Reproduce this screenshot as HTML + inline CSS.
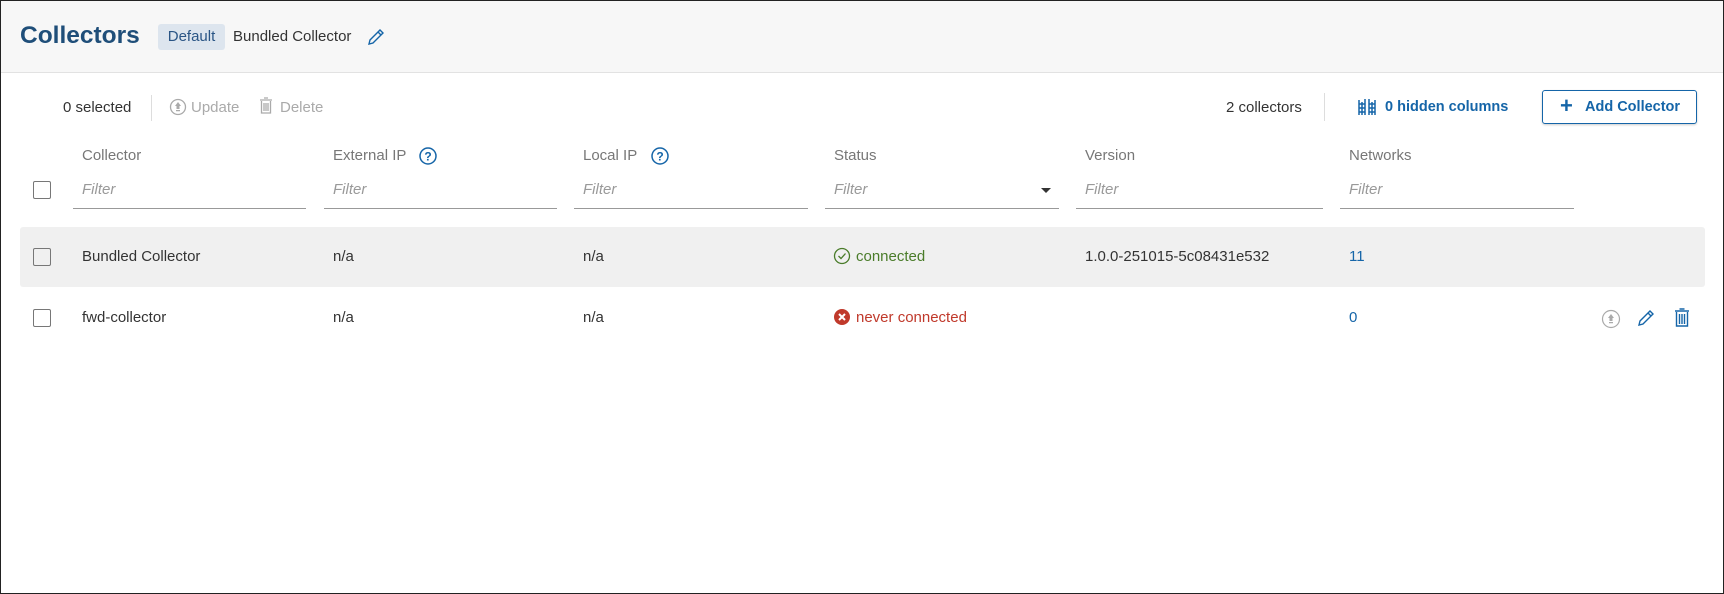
<!DOCTYPE html>
<html><head><meta charset="utf-8"><style>
*{box-sizing:border-box;margin:0;padding:0}
body{width:1724px;height:594px;background:#fff;font-family:"Liberation Sans",Arial,sans-serif;color:#333;font-size:15px;position:relative;overflow:hidden}
.frame{position:absolute;left:0;top:0;width:1724px;height:594px;border:1px solid #222}
.hdr{position:absolute;left:1px;top:1px;width:1722px;height:72px;background:#f7f7f7;border-bottom:1px solid #e2e2e2}
.abs{position:absolute;white-space:nowrap}
.t{color:#1f4e79;font-size:24.5px;font-weight:bold;left:20px;top:22px}
.badge{left:158px;top:24px;width:67px;height:26px;background:#dde5ee;border-radius:3px;color:#2a5585;font-size:15px;text-align:center;line-height:26px}
.lbl{color:#777}
.flt{color:#999;font-style:italic}
.ul{position:absolute;height:1px;background:#999;top:208px}
.cb{position:absolute;width:18px;height:18px;border:1px solid #777;border-radius:2px;left:33px}
.blue{color:#1565a8}
</style></head><body>
<div class="hdr"></div>
<div class="abs t">Collectors</div>
<div class="abs badge">Default</div>
<div class="abs" style="left:233px;top:28px;font-size:15px;color:#333">Bundled Collector</div>
<svg class="abs" style="left:366px;top:27px" width="20" height="20" viewBox="0 0 20 20"><path d="M3 17l1-4L14 3l3 3L7 16z M12 5l3 3" fill="none" stroke="#1565a8" stroke-width="1.4"/></svg>

<div class="abs" style="left:63px;top:99px">0 selected</div>
<div class="abs" style="left:151px;top:95px;width:1px;height:26px;background:#ddd"></div>
<svg class="abs" style="left:169px;top:98px" width="18" height="18" viewBox="0 0 18 18"><circle cx="9" cy="9" r="7.5" fill="none" stroke="#aaa" stroke-width="1.3"/><path d="M9 4l3 4H6z M7.5 8h3v3h-3z M7 12h4v1.3H7z" fill="#aaa"/></svg>
<div class="abs" style="left:191px;top:99px;color:#aaa">Update</div>
<svg class="abs" style="left:259px;top:97px" width="14" height="18" viewBox="0 0 14 18"><path d="M1 3h12M5 1h4M2.5 4v12h9V4M5 6v8M7 6v8M9 6v8" fill="none" stroke="#aaa" stroke-width="1.3"/></svg>
<div class="abs" style="left:280px;top:99px;color:#aaa">Delete</div>

<div class="abs" style="left:1226px;top:99px">2 collectors</div>
<div class="abs" style="left:1324px;top:93px;width:1px;height:28px;background:#ddd"></div>
<svg class="abs" style="left:1358px;top:98px" width="18" height="18" viewBox="0 0 18 18"><path d="M1 2v15M4 4v13M7 1v16M11 1v16M14 4v13M17 2v15M1 6h6M1 10h6M1 14h6M11 6h6M11 10h6M11 14h6" stroke="#1565a8" stroke-width="1.5" fill="none"/></svg>
<div class="abs blue" style="left:1385px;top:99px;font-weight:bold;font-size:14.5px">0 hidden columns</div>
<div class="abs" style="left:1542px;top:90px;width:155px;height:34px;border:1px solid #1565a8;border-radius:3px;box-shadow:0 1px 2px rgba(0,0,0,.2)"></div>
<div class="abs blue" style="left:1560px;top:96px;font-size:22px;font-weight:bold;line-height:20px">+</div>
<div class="abs blue" style="left:1585px;top:99px;font-weight:bold;font-size:14.5px">Add Collector</div>

<div class="abs lbl" style="left:82px;top:147px">Collector</div>
<div class="abs lbl" style="left:333px;top:147px">External IP</div>
<svg class="abs" style="left:418px;top:146px" width="20" height="20" viewBox="0 0 20 20"><circle cx="10" cy="10" r="8" fill="none" stroke="#1565a8" stroke-width="1.5"/><text x="10" y="14.5" text-anchor="middle" font-size="12" font-weight="bold" fill="#1565a8" font-family="Liberation Sans">?</text></svg>
<div class="abs lbl" style="left:583px;top:147px">Local IP</div>
<svg class="abs" style="left:650px;top:146px" width="20" height="20" viewBox="0 0 20 20"><circle cx="10" cy="10" r="8" fill="none" stroke="#1565a8" stroke-width="1.5"/><text x="10" y="14.5" text-anchor="middle" font-size="12" font-weight="bold" fill="#1565a8" font-family="Liberation Sans">?</text></svg>
<div class="abs lbl" style="left:834px;top:147px">Status</div>
<div class="abs lbl" style="left:1085px;top:147px">Version</div>
<div class="abs lbl" style="left:1349px;top:147px">Networks</div>

<div class="cb" style="top:181px"></div>
<div class="abs flt" style="left:82px;top:181px">Filter</div>
<div class="abs flt" style="left:333px;top:181px">Filter</div>
<div class="abs flt" style="left:583px;top:181px">Filter</div>
<div class="abs flt" style="left:834px;top:181px">Filter</div>
<div class="abs" style="left:1041px;top:188px;width:0;height:0;border-left:5px solid transparent;border-right:5px solid transparent;border-top:5px solid #333"></div>
<div class="abs flt" style="left:1085px;top:181px">Filter</div>
<div class="abs flt" style="left:1349px;top:181px">Filter</div>
<div class="ul" style="left:73px;width:233px"></div>
<div class="ul" style="left:324px;width:233px"></div>
<div class="ul" style="left:574px;width:234px"></div>
<div class="ul" style="left:825px;width:234px"></div>
<div class="ul" style="left:1076px;width:247px"></div>
<div class="ul" style="left:1340px;width:234px"></div>

<div class="abs" style="left:20px;top:227px;width:1685px;height:60px;background:#f0f0f0;border-radius:3px"></div>
<div class="cb" style="top:248px"></div>
<div class="abs" style="left:82px;top:248px">Bundled Collector</div>
<div class="abs" style="left:333px;top:248px">n/a</div>
<div class="abs" style="left:583px;top:248px">n/a</div>
<svg class="abs" style="left:833px;top:247px" width="18" height="18" viewBox="0 0 18 18"><circle cx="9" cy="9" r="7.5" fill="none" stroke="#4a7c2a" stroke-width="1.3"/><path d="M5.5 9l2.5 2.5 4.5-5" fill="none" stroke="#4a7c2a" stroke-width="1.3"/></svg>
<div class="abs" style="left:856px;top:248px;color:#4a7c2a">connected</div>
<div class="abs" style="left:1085px;top:248px">1.0.0-251015-5c08431e532</div>
<div class="abs blue" style="left:1349px;top:248px">11</div>

<div class="cb" style="top:309px"></div>
<div class="abs" style="left:82px;top:309px">fwd-collector</div>
<div class="abs" style="left:333px;top:309px">n/a</div>
<div class="abs" style="left:583px;top:309px">n/a</div>
<svg class="abs" style="left:833px;top:308px" width="18" height="18" viewBox="0 0 18 18"><circle cx="9" cy="9" r="8" fill="#c0392b"/><path d="M6 6l6 6M12 6l-6 6" stroke="#fff" stroke-width="2"/></svg>
<div class="abs" style="left:856px;top:309px;color:#c0392b">never connected</div>
<div class="abs blue" style="left:1349px;top:309px">0</div>
<svg class="abs" style="left:1601px;top:309px" width="20" height="20" viewBox="0 0 20 20"><circle cx="10" cy="10" r="8.5" fill="none" stroke="#aaa" stroke-width="1.2"/><path d="M10 5l3 4H7z M8.5 9h3v3h-3z M8 13h4v1.2H8z" fill="#aaa"/></svg>
<svg class="abs" style="left:1636px;top:308px" width="20" height="20" viewBox="0 0 20 20"><path d="M3 17l1-4L14 3l3 3L7 16z M12 5l3 3" fill="none" stroke="#1565a8" stroke-width="1.4"/></svg>
<svg class="abs" style="left:1674px;top:308px" width="16" height="20" viewBox="0 0 16 20"><path d="M1 3h14M5.5 1h5M2.5 4v14h11V4M5.5 6v10M8 6v10M10.5 6v10" fill="none" stroke="#1565a8" stroke-width="1.4"/></svg>
<div class="frame"></div>
</body></html>
